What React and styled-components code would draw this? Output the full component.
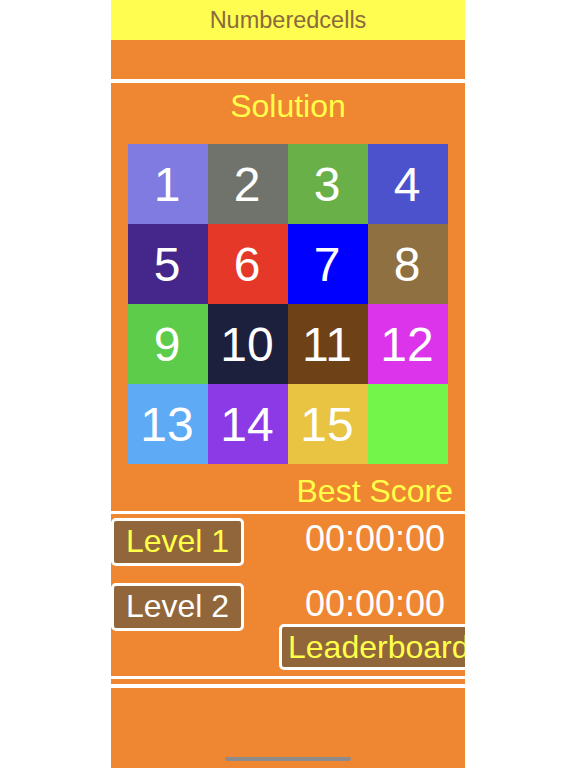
import React from 'react'
import styled, { createGlobalStyle } from 'styled-components'

const cells = [
    { n: 1, c: '#7f7be0' },
    { n: 2, c: '#70736b' },
    { n: 3, c: '#6ab048' },
    { n: 4, c: '#4c52cc' },
    { n: 5, c: '#45268a' },
    { n: 6, c: '#e53828' },
    { n: 7, c: '#0000ff' },
    { n: 8, c: '#8f7040' },
    { n: 9, c: '#5ccc4a' },
    { n: 10, c: '#1d203c' },
    { n: 11, c: '#6e4216' },
    { n: 12, c: '#db34ea' },
    { n: 13, c: '#5faaf5' },
    { n: 14, c: '#8b3ae6' },
    { n: 15, c: '#e8c442' },
    { n: '', c: '#74f54a' },
]

const GlobalStyle = createGlobalStyle`
    html, body {
        margin: 0;
        padding: 0;
        background: #ffffff;
    }
    body {
        font-family: "Liberation Sans", Arial, sans-serif;
    }
`

const App = () => {
    return (
        <>
            <GlobalStyle />
            <Screen>
                <TitleBar>Numberedcells</TitleBar>
                <Band height="39px" />
                <Section top="4px">
                    <Heading>Solution</Heading>
                    <Grid>
                        {cells.map((cell, i) => (
                            <Cell key={i} bg={cell.c}>{cell.n}</Cell>
                        ))}
                    </Grid>
                    <BestScore>Best Score</BestScore>
                </Section>
                <Section top="3px">
                    <ScoreArea>
                        <LevelColumn>
                            <LevelButton color="#ffff4a">Level 1</LevelButton>
                            <LevelButton color="#ffffff">Level 2</LevelButton>
                        </LevelColumn>
                        <TimeColumn>
                            <Timer>00:00:00</Timer>
                            <Timer second>00:00:00</Timer>
                            <LeaderButton>Leaderboard</LeaderButton>
                        </TimeColumn>
                    </ScoreArea>
                </Section>
                <Band height="5px" top="3px" />
                <Footer>
                    <HomeIndicator />
                </Footer>
            </Screen>
        </>
    )
}

const Screen = styled.div`
    width: 354px;
    margin: 0 auto;
    min-height: 100vh;
    display: flex;
    flex-direction: column;
    overflow: hidden;
`
const TitleBar = styled.div`
    height: 40px;
    line-height: 40px;
    background: #fffd50;
    color: #8a6a3e;
    font-size: 23.5px;
    text-align: center;
`
const Band = styled.div`
    height: ${props => props.height};
    margin-top: ${props => props.top || '0'};
    background: #ef8632;
`
const Section = styled.div`
    margin-top: ${props => props.top};
    background: #ef8632;
    display: flex;
    flex-direction: column;
`
const Heading = styled.div`
    margin-top: 3px;
    height: 40px;
    line-height: 40px;
    font-size: 32px;
    color: #ffff4a;
    text-align: center;
`
const Grid = styled.div`
    margin: 18px auto 0;
    display: grid;
    grid-template-columns: repeat(4, 80px);
    grid-auto-rows: 80px;
`
const Cell = styled.div`
    background: ${props => props.bg};
    color: #ffffff;
    font-size: 48px;
    display: flex;
    align-items: center;
    justify-content: center;
    padding-right: 2px;
`
const BestScore = styled.div`
    margin-top: 6.5px;
    height: 40px;
    line-height: 40px;
    padding-right: 12px;
    font-size: 32px;
    color: #ffff4a;
    text-align: right;
`
const ScoreArea = styled.div`
    display: flex;
    height: 162px;
`
const LevelColumn = styled.div`
    display: flex;
    flex-direction: column;
    gap: 17px;
    padding-top: 4px;
`
const LevelButton = styled.div`
    width: 133px;
    height: 48px;
    box-sizing: border-box;
    border: 3px solid #ffffff;
    border-radius: 5px;
    background: #91663a;
    color: ${props => props.color};
    font-size: 32px;
    line-height: 41px;
    text-align: center;
`
const TimeColumn = styled.div`
    flex: 1;
    display: flex;
    flex-direction: column;
    padding-top: 5px;
    padding-left: 35px;
    min-width: 0;
`
const Timer = styled.div`
    height: 40px;
    line-height: 40px;
    margin-top: ${props => (props.second ? '25.5px' : '0')};
    padding-left: 26px;
    font-size: 36px;
    color: #ffffff;
    white-space: nowrap;
`
const LeaderButton = styled.div`
    height: 46px;
    width: 200px;
    box-sizing: border-box;
    border: 3px solid #ffffff;
    border-radius: 5px;
    background: #91663a;
    color: #ffff4a;
    font-size: 32px;
    line-height: 40px;
    padding-left: 6px;
    white-space: nowrap;
`
const Footer = styled.div`
    flex: 1;
    margin-top: 4px;
    background: #ef8632;
    display: flex;
    flex-direction: column;
    justify-content: flex-end;
    align-items: center;
    padding-bottom: 7px;
`
const HomeIndicator = styled.div`
    width: 126px;
    height: 4px;
    border-radius: 2px;
    background: #8c8c8c;
`

export default App
